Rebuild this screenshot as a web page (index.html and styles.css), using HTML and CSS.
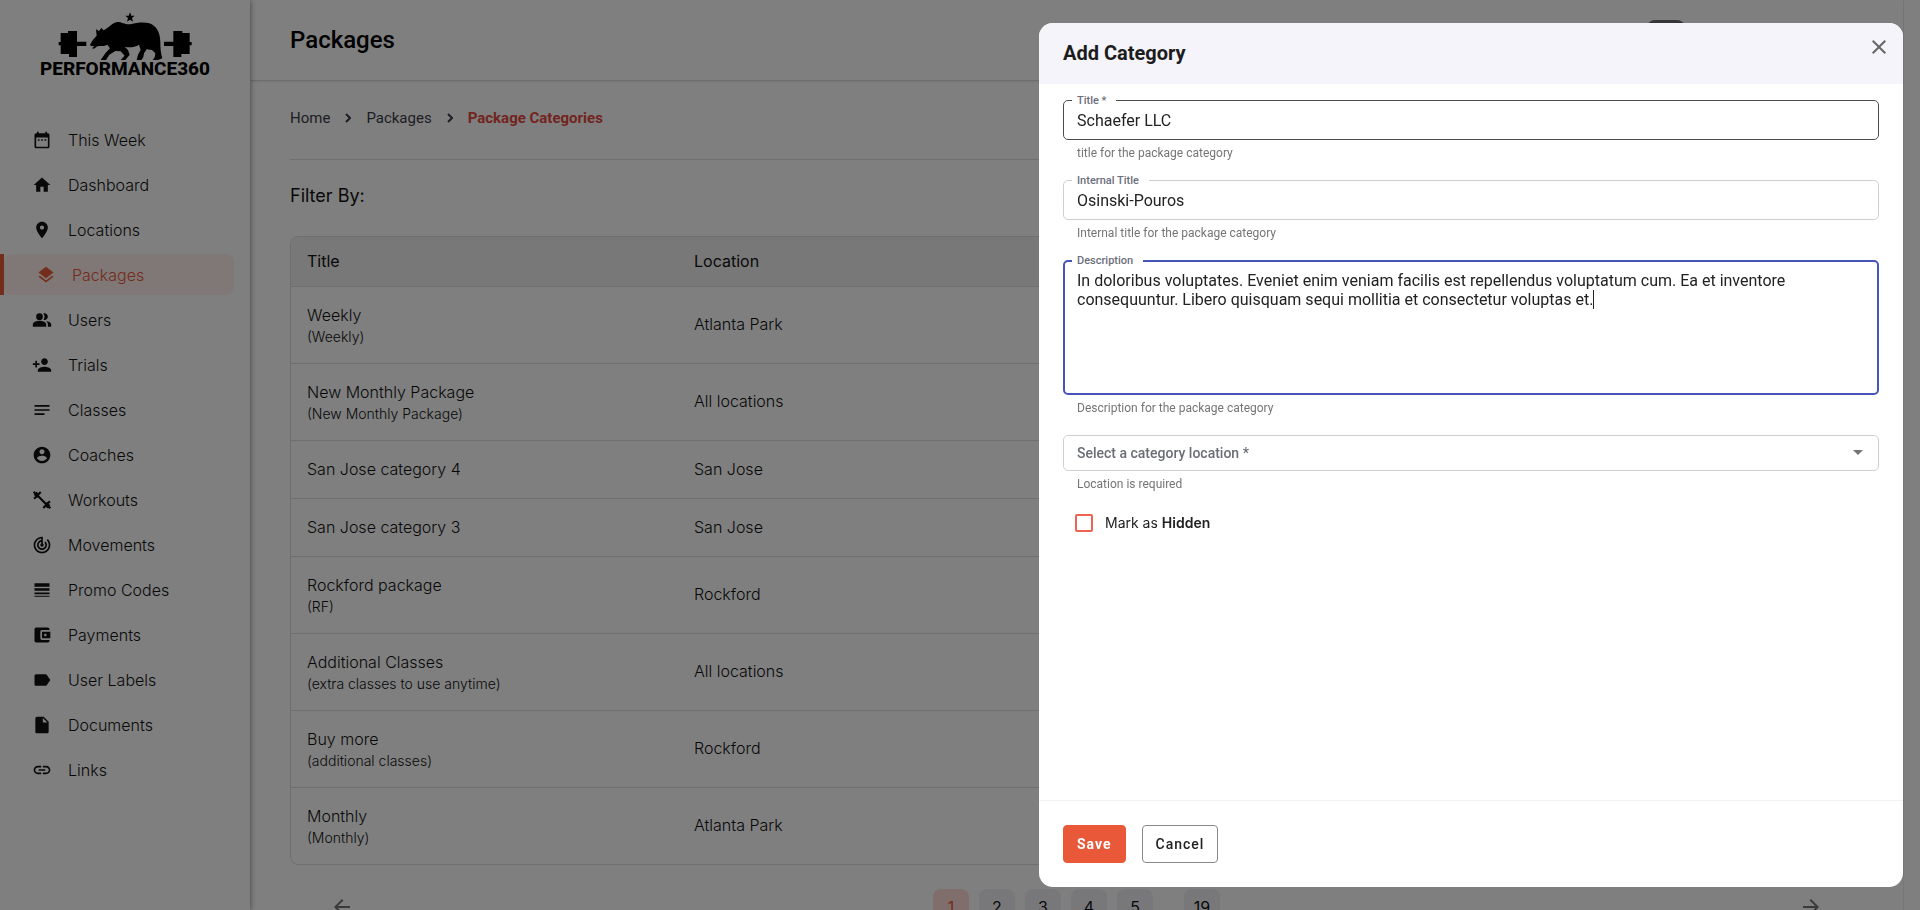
FILE: index.html
```html
<!DOCTYPE html>
<html lang="en">
<head>
<meta charset="utf-8">
<meta name="viewport" content="width=device-width, initial-scale=1">
<title>Packages</title>
<link rel="stylesheet" href="styles.css">
</head>
<body>
<div class="app">
  <aside class="sidebar">
    <a class="brand" href="#">
      <svg class="brand-art" viewBox="120 30 510 150" aria-hidden="true">
        <path d="M390 37l4 10h10l-8 7 3 11-9-6-9 6 3-11-8-7h10z"/>
        <path d="M176 126h6v-27h22v-6h27v32h28v13h-28v33h-24v-9h-25v-26h-6z"/>
        <path d="M575 126h-6v-27h-22v-6h-27v32h-28v13h28v33h24v-9h25v-26h6z"/>
        <path d="M270 134L279 119 290 107 288 88 297 93 304 84 311 91C327 83 336 68 352 66C366 66 374 74 391 73C412 68 431 66 448 70C468 77 480 95 481 125C481 145 482 158 487 175L474 180H458L464 172 466 160 456 150 440 148 432 160 430 172 424 180H410L414 164 422 150 417 134C403 142 388 144 374 140L384 150 389 164 376 180H362L374 167 362 154 346 153 328 164 318 180H302L316 160 330 145 322 134C312 140 300 136 292 139L282 146 276 145 283 139 273 138z"/>
      </svg>
      <span class="brand-name">PERFORMANCE360</span>
    </a>
    <nav aria-label="Main">
      <ul class="nav">
        <li><a href="#"><svg viewBox="0 0 24 24"><path d="M19 4h-1V2h-2v2H8V2H6v2H5c-1.110 0-1.990.9-1.990 2L3 20c0 1.100.89 2 2 2h14c1.100 0 2-.9 2-2V6c0-1.100-.9-2-2-2zm0 16H5V9h14v11zM9 11H7v2h2v-2zm4 0h-2v2h2v-2zm4 0h-2v2h2v-2z"/></svg>This Week</a></li>
        <li><a href="#"><svg viewBox="0 0 24 24"><path d="M10 20v-6h4v6h5v-8h3L12 3 2 12h3v8z"/></svg>Dashboard</a></li>
        <li><a href="#"><svg viewBox="0 0 24 24"><path d="M12 2C8.13 2 5 5.13 5 9c0 5.25 7 13 7 13s7-7.75 7-13c0-3.87-3.13-7-7-7zm0 9.500c-1.380 0-2.500-1.120-2.500-2.500s1.120-2.500 2.500-2.500 2.500 1.120 2.500 2.500-1.120 2.500-2.500 2.500z"/></svg>Locations</a></li>
        <li class="active"><a href="#" aria-current="page"><svg viewBox="0 0 24 24"><path d="M11.990 18.540l-7.370-5.730L3 14.070l9 7 9-7-1.630-1.270-7.380 5.740zM12 16l7.360-5.730L21 9l-9-7-9 7 1.630 1.270L12 16z"/></svg>Packages</a></li>
        <li><a href="#"><svg viewBox="0 0 24 24"><path d="M16.670 13.130C18.040 14.060 19 15.320 19 17v3h4v-3c0-2.180-3.570-3.470-6.330-3.870z"/><circle cx="9" cy="8" r="4"/><path d="M15 12c2.210 0 4-1.790 4-4s-1.790-4-4-4c-.47 0-.91.1-1.330.24C14.500 5.270 15 6.580 15 8s-.5 2.730-1.330 3.760c.42.14.86.24 1.330.24zM9 13c-2.670 0-8 1.340-8 4v3h16v-3c0-2.660-5.330-4-8-4z"/></svg>Users</a></li>
        <li><a href="#"><svg viewBox="0 0 24 24"><path d="M15 12c2.210 0 4-1.790 4-4s-1.790-4-4-4-4 1.790-4 4 1.790 4 4 4zm-9-2V7H4v3H1v2h3v3h2v-3h3v-2H6zm9 4c-2.670 0-8 1.340-8 4v2h16v-2c0-2.660-5.330-4-8-4z"/></svg>Trials</a></li>
        <li><a href="#"><svg viewBox="0 0 24 24"><path d="M3 18h12v-2H3v2zM3 6v2h18V6H3zm0 7h18v-2H3v2z"/></svg>Classes</a></li>
        <li><a href="#"><svg viewBox="0 0 24 24"><path d="M12 2C6.480 2 2 6.480 2 12s4.480 10 10 10 10-4.480 10-10S17.520 2 12 2zm0 3c1.660 0 3 1.340 3 3s-1.340 3-3 3-3-1.340-3-3 1.340-3 3-3zm0 14.200c-2.500 0-4.710-1.280-6-3.220.03-1.990 4-3.080 6-3.080 1.990 0 5.970 1.090 6 3.080-1.290 1.940-3.500 3.220-6 3.220z"/></svg>Coaches</a></li>
        <li><a href="#"><svg viewBox="0 0 24 24"><path d="M7 7l10 10M2.500 10.500l8-8M13.500 21.500l8-8M3 6.500l3.500-3.500M17.500 21l3.500-3.500M2 2l3 3M19 19l3 3M4 7l4 1M16 16l4 1" fill="none" stroke="currentColor" stroke-width="2.600"/></svg>Workouts</a></li>
        <li><a href="#"><svg viewBox="0 0 24 24"><path d="M19.070 4.930l-1.410 1.410C19.100 7.790 20 9.790 20 12c0 4.420-3.580 8-8 8s-8-3.580-8-8c0-4.080 3.050-7.440 7-7.930v2.020C8.160 6.570 6 9.030 6 12c0 3.310 2.690 6 6 6s6-2.690 6-6c0-1.660-.67-3.160-1.760-4.240l-1.410 1.410C15.550 9.900 16 10.900 16 12c0 2.210-1.790 4-4 4s-4-1.790-4-4c0-1.860 1.280-3.410 3-3.860v2.140c-.6.35-1 .98-1 1.720 0 1.100.9 2 2 2s2-.9 2-2c0-.74-.4-1.380-1-1.720V2h-1C6.480 2 2 6.480 2 12s4.480 10 10 10 10-4.480 10-10c0-2.760-1.120-5.260-2.930-7.070z"/></svg>Movements</a></li>
        <li><a href="#"><svg viewBox="0 0 24 24"><path d="M3 17h18v-2H3v2zm0 3h18v-1H3v1zm0-7h18v-3H3v3zm0-9v4h18V4H3z"/></svg>Promo Codes</a></li>
        <li><a href="#"><svg viewBox="0 0 24 24"><path d="M21 18v1c0 1.100-.9 2-2 2H5c-1.110 0-2-.9-2-2V5c0-1.100.89-2 2-2h14c1.100 0 2 .9 2 2v1h-9c-1.110 0-2 .9-2 2v8c0 1.100.89 2 2 2h9zm-9-2h10V8H12v8zm4-2.500c-.83 0-1.500-.67-1.500-1.500s.67-1.500 1.500-1.500 1.500.67 1.500 1.500-.67 1.500-1.500 1.500z"/></svg>Payments</a></li>
        <li><a href="#"><svg viewBox="0 0 24 24"><path d="M17.630 5.840C17.270 5.330 16.670 5 16 5L5 5.010C3.900 5.010 3 5.900 3 7v10c0 1.100.9 1.990 2 1.990L16 19c.67 0 1.270-.33 1.630-.84L22 12l-4.370-6.160z"/></svg>User Labels</a></li>
        <li><a href="#"><svg viewBox="0 0 24 24"><path d="M6 2c-1.100 0-1.990.9-1.990 2L4 20c0 1.100.89 2 1.990 2H18c1.100 0 2-.9 2-2V8l-6-6H6zm7 7V3.500L18.500 9H13z"/></svg>Documents</a></li>
        <li><a href="#"><svg viewBox="0 0 24 24"><path d="M3.900 12c0-1.710 1.390-3.100 3.100-3.100h4V7H7c-2.760 0-5 2.240-5 5s2.240 5 5 5h4v-1.900H7c-1.710 0-3.100-1.390-3.100-3.100zM8 13h8v-2H8v2zm9-6h-4v1.900h4c1.710 0 3.100 1.390 3.100 3.100s-1.390 3.100-3.100 3.100h-4V17h4c2.760 0 5-2.240 5-5s-2.240-5-5-5z"/></svg>Links</a></li>
      </ul>
    </nav>
  </aside>

  <main class="main">
    <header class="topbar">
      <h1>Packages</h1>
      <span class="avatar"></span>
    </header>
    <div class="content">
      <nav class="crumbs" aria-label="Breadcrumb">
        <a href="#">Home</a>
        <svg viewBox="0 0 6 10" aria-hidden="true"><path d="M1 1l4 4-4 4"/></svg>
        <a href="#">Packages</a>
        <svg viewBox="0 0 6 10" aria-hidden="true"><path d="M1 1l4 4-4 4"/></svg>
        <a class="current" href="#" aria-current="page">Package Categories</a>
      </nav>
      <h2 class="filter">Filter By:</h2>
      <div class="table-wrap">
        <table>
          <thead><tr><th class="col-title">Title</th><th>Location</th></tr></thead>
          <tbody>
            <tr><td>Weekly<small>(Weekly)</small></td><td>Atlanta Park</td></tr>
            <tr><td>New Monthly Package<small>(New Monthly Package)</small></td><td>All locations</td></tr>
            <tr><td>San Jose category 4</td><td>San Jose</td></tr>
            <tr><td>San Jose category 3</td><td>San Jose</td></tr>
            <tr><td>Rockford package<small>(RF)</small></td><td>Rockford</td></tr>
            <tr><td>Additional Classes<small>(extra classes to use anytime)</small></td><td>All locations</td></tr>
            <tr><td>Buy more<small>(additional classes)</small></td><td>Rockford</td></tr>
            <tr><td>Monthly<small>(Monthly)</small></td><td>Atlanta Park</td></tr>
          </tbody>
        </table>
      </div>
      <div class="pager">
        <button class="arrow" type="button" aria-label="Previous page"><svg viewBox="0 0 24 24"><path d="M20 11H7.830l5.590-5.590L12 4l-8 8 8 8 1.410-1.410L7.830 13H20v-2z"/></svg></button>
        <div class="pages">
          <button class="on" type="button">1</button>
          <button type="button">2</button>
          <button type="button">3</button>
          <button type="button">4</button>
          <button type="button">5</button>
          <button class="last" type="button">19</button>
        </div>
        <button class="arrow" type="button" aria-label="Next page"><svg viewBox="0 0 24 24"><path d="M12 4l-1.410 1.410L16.170 11H4v2h12.170l-5.580 5.590L12 20l8-8z"/></svg></button>
      </div>
    </div>
  </main>
</div>

<div class="overlay">
  <form class="dialog" role="dialog" aria-labelledby="dialog-title">
    <header class="dialog-head">
      <h2 id="dialog-title">Add Category</h2>
      <button class="close" type="button" aria-label="Close"><svg viewBox="0 0 24 24"><path d="M19 6.410L17.590 5 12 10.590 6.410 5 5 6.410 10.590 12 5 17.590 6.410 19 12 13.410 17.590 19 19 17.590 13.410 12z"/></svg></button>
    </header>
    <div class="dialog-body">
      <div class="field hovered">
        <label for="f-title">Title *</label>
        <input id="f-title" type="text" value="Schaefer LLC">
        <p class="hint">title for the package category</p>
      </div>
      <div class="field">
        <label for="f-internal">Internal Title</label>
        <input id="f-internal" type="text" value="Osinski-Pouros">
        <p class="hint">Internal title for the package category</p>
      </div>
      <div class="field focused">
        <label for="f-desc">Description</label>
        <textarea id="f-desc">In doloribus voluptates. Eveniet enim veniam facilis est repellendus voluptatum cum. Ea et inventore consequuntur. Libero quisquam sequi mollitia et consectetur voluptas et.</textarea>
        <span class="caret"></span>
        <p class="hint">Description for the package category</p>
      </div>
      <div class="field select-field">
        <select id="f-loc" aria-label="Select a category location"><option>Select a category location *</option></select>
        <svg class="select-arrow" viewBox="0 0 10 5" aria-hidden="true"><path d="M0 0h10L5 5z"/></svg>
        <p class="hint">Location is required</p>
      </div>
      <label class="check"><input type="checkbox"><span>Mark as <b>Hidden</b></span></label>
    </div>
    <footer class="dialog-foot">
      <button class="btn save" type="submit">Save</button>
      <button class="btn cancel" type="button">Cancel</button>
    </footer>
  </form>
</div>
</body>
</html>
```
FILE: styles.css
```css
* { box-sizing: border-box; }
body {
  margin: 0;
  font-family: Inter, "Liberation Sans", sans-serif;
  font-size: 16px;
  color: #111;
  background: #fff;
}
h1, h2, p, ul { margin: 0; padding: 0; }
a { color: inherit; text-decoration: none; }
button, input, select, textarea { font: inherit; color: inherit; margin: 0; }
svg { fill: currentColor; flex: none; }

.app {
  display: flex;
  height: 100vh;
  overflow: hidden;
  padding-right: 16px;
}

/* Sidebar */
.sidebar {
  position: relative;
  z-index: 1;
  width: 250px;
  flex: none;
  background: #fff;
  box-shadow: 0 0 6px rgba(0, 0, 0, .5);
}
.brand {
  display: flex;
  flex-direction: column;
  align-items: center;
  height: 119px;
  padding-top: 10px;
  color: #000;
}
.brand-art { width: 170px; height: 50px; }
.brand-name {
  font-family: Roboto, sans-serif;
  font-weight: 800;
  font-size: 19px;
  line-height: 17px;
}
.nav {
  display: flex;
  flex-direction: column;
  gap: 4px;
  list-style: none;
}
.nav a {
  display: flex;
  align-items: center;
  gap: 16px;
  height: 41px;
  padding-left: 32px;
  margin-right: 16px;
  border-radius: 8px;
  font-weight: 300;
}
.nav svg { width: 20px; height: 20px; }
.nav .active { border-left: 4px solid #e95839; color: #e95839; }
.nav .active a { background: #fff0ec; }

/* Page */
.main {
  flex: 1;
  min-width: 0;
  border-right: 1px solid #efefef;
}
.topbar {
  display: flex;
  justify-content: space-between;
  height: 81px;
  padding: 20px 218px 0 40px;
  border-bottom: 1px solid #dcdcdc;
  box-shadow: 0 1px 2px rgba(0, 0, 0, .08);
}
.topbar h1 {
  font: 500 24px/40px Roboto, sans-serif;
  color: #000;
}
.avatar {
  width: 38px;
  height: 38px;
  border-radius: 8px;
  background: #6a6c70;
}
.content { padding: 0 40px; }
.crumbs {
  display: flex;
  align-items: center;
  gap: 15px;
  height: 79px;
  padding-bottom: 4px;
  border-bottom: 1px solid #dedede;
  font: 400 15px/20px Roboto, sans-serif;
  color: #3b3d49;
}
.crumbs svg { width: 6px; height: 10px; fill: none; stroke: currentColor; stroke-width: 2; }
.crumbs .current { font-weight: 700; color: #e5493f; }
.filter { font-size: 18px; line-height: 24px; font-weight: 400; padding: 24px 0 28px; }

.table-wrap {
  border: 1px solid #dedede;
  border-radius: 8px;
  overflow: hidden;
}
table { width: 100%; border-collapse: collapse; text-align: left; }
th {
  height: 49px;
  padding: 0 16px;
  background: #f0f0f0;
  border-bottom: 1px solid #dedede;
  font-weight: 400;
}
.col-title { width: 387px; }
td { height: 58px; padding: 16px 16px 17px; font-weight: 300; line-height: 24px; }
tbody tr + tr td { border-top: 1px solid #dedede; }
td small { display: block; font-size: 14px; line-height: 19px; }

.pager {
  display: flex;
  align-items: center;
  justify-content: space-between;
  padding: 24px 40px;
}
.pages { display: flex; gap: 10px; }
.pager button { border: 0; padding: 0; height: 36px; border-radius: 8px; }
.pages button { width: 36px; background: #f0f0f6; }
.pages .on { background: #ffdcd8; color: #e95839; }
.pages .last { margin-left: 21px; }
.pager .arrow { background: none; width: 24px; }
.arrow svg { display: block; width: 24px; fill: #777; }

/* Dialog */
.overlay {
  position: fixed;
  inset: 0;
  z-index: 2;
  display: flex;
  align-items: center;
  justify-content: flex-end;
  padding-right: 17px;
  background: rgba(0, 0, 0, .5);
}
.dialog {
  display: flex;
  flex-direction: column;
  width: 45vw;
  height: 95vh;
  background: #fff;
  border-radius: 14px;
  overflow: hidden;
  font-family: Roboto, sans-serif;
  color: #222;
}
.dialog-head {
  display: flex;
  align-items: flex-start;
  justify-content: space-between;
  padding: 12px 12px 0 24px;
  background: #f4f4fa;
}
.dialog-head h2 { font-size: 20px; line-height: 24px; font-weight: 700; padding: 6px 0 19px; color: #1c1c1c; }
.close { width: 24px; height: 24px; padding: 0; border: 0; background: none; color: #666; }
.close svg { display: block; }
.dialog-body { flex: 1; padding: 16px 24px; }
.field { position: relative; height: 80px; }
.field label {
  position: absolute;
  top: -6px;
  left: 9px;
  padding: 0 10px 0 5px;
  background: #fff;
  font-size: 11px;
  line-height: 14px;
  font-weight: 500;
  color: #6c6e7c;
}
.field input, .field textarea, .field select {
  display: block;
  width: 100%;
  height: 40px;
  padding: 2px 13px 0;
  border: 1px solid #cfcfcf;
  border-radius: 5px;
  background: none;
  outline: 0;
}
.hint { padding: 5px 14px 0; font-size: 12px; line-height: 16px; color: #757575; }
.hovered input { border-color: #4a4a4a; }
.focused { height: 175px; }
.field textarea {
  height: 135px;
  padding: 9px 12px;
  border: 2px solid #4655b8;
  line-height: 19px;
  resize: none;
}
.caret { position: absolute; left: 530px; top: 30px; width: 1px; height: 19px; background: #222; }
.field select {
  height: 36px;
  padding: 0 13px;
  appearance: none;
  font-size: 14px;
  font-weight: 500;
  color: #6a6d74;
}
.select-field { height: 72px; }
.select-arrow { position: absolute; top: 15px; right: 16px; width: 10px; height: 5px; fill: #757575; }
.check {
  display: flex;
  align-items: center;
  gap: 12px;
  padding: 7px 12px;
  font-family: Inter, sans-serif;
  font-size: 14px;
  line-height: 18px;
}
.check input {
  appearance: none;
  width: 18px;
  height: 18px;
  border: 2px solid #ee6352;
  border-radius: 2px;
}
.check b { font-weight: 600; }
.dialog-foot {
  display: flex;
  gap: 16px;
  padding: 24px;
  border-top: 1px solid #f2f2f2;
}
.btn {
  height: 38px;
  padding: 0 13px;
  border: 1px solid #8a8a8a;
  border-radius: 4px;
  background: #fff;
  font-size: 14px;
  font-weight: 500;
  letter-spacing: 1px;
}
.save { border-color: #e95839; background: #e95839; color: #fff; font-weight: 700; }
```
